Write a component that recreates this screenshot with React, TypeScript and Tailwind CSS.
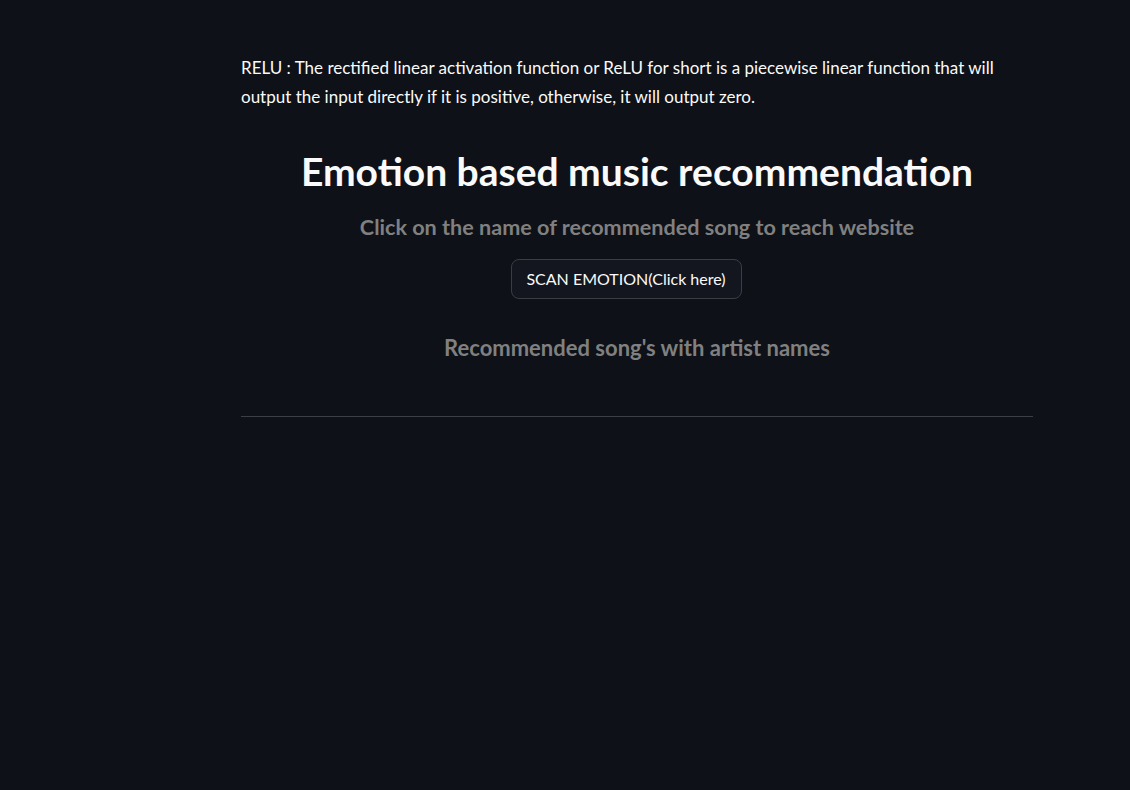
import React from "react";

const font = { fontFamily: "Lato, 'Noto Sans', sans-serif" };

export default function App() {
  return (
    <div className="min-h-[790px] w-full bg-[#0e1117] text-[#fafafa]" style={font}>
      <div className="ml-[241px] flex w-[792px] flex-col pt-[53px]">
        <p className="text-[17px] leading-[29px]">
          RELU : The rectified linear activation function or ReLU for short is a piecewise linear
          function that will output the input directly if it is positive, otherwise, it will
          output zero.
        </p>

        <h1 className="mt-[33px] text-center text-[39px] font-bold leading-[54px]">
          Emotion based music recommendation
        </h1>

        <h3 className="mt-[15px] text-center text-[21.6px] font-bold leading-[28px] text-[#808080]">
          Click on the name of recommended song to reach website
        </h3>

        <div className="mt-[18px] flex justify-center pr-[22px]">
          <button className="h-[40px] w-[231px] rounded-lg border border-[#3b3d44] bg-[#13161e] text-[16px] text-[#fafafa]">
            SCAN EMOTION(Click here)
          </button>
        </div>

        <h3 className="mt-[35px] text-center text-[22px] font-bold leading-[28px] text-[#808080]">
          Recommended song's with artist names
        </h3>

        <hr className="mt-[54px] border-0 border-t border-[#3d3f45]" />
      </div>
    </div>
  );
}
